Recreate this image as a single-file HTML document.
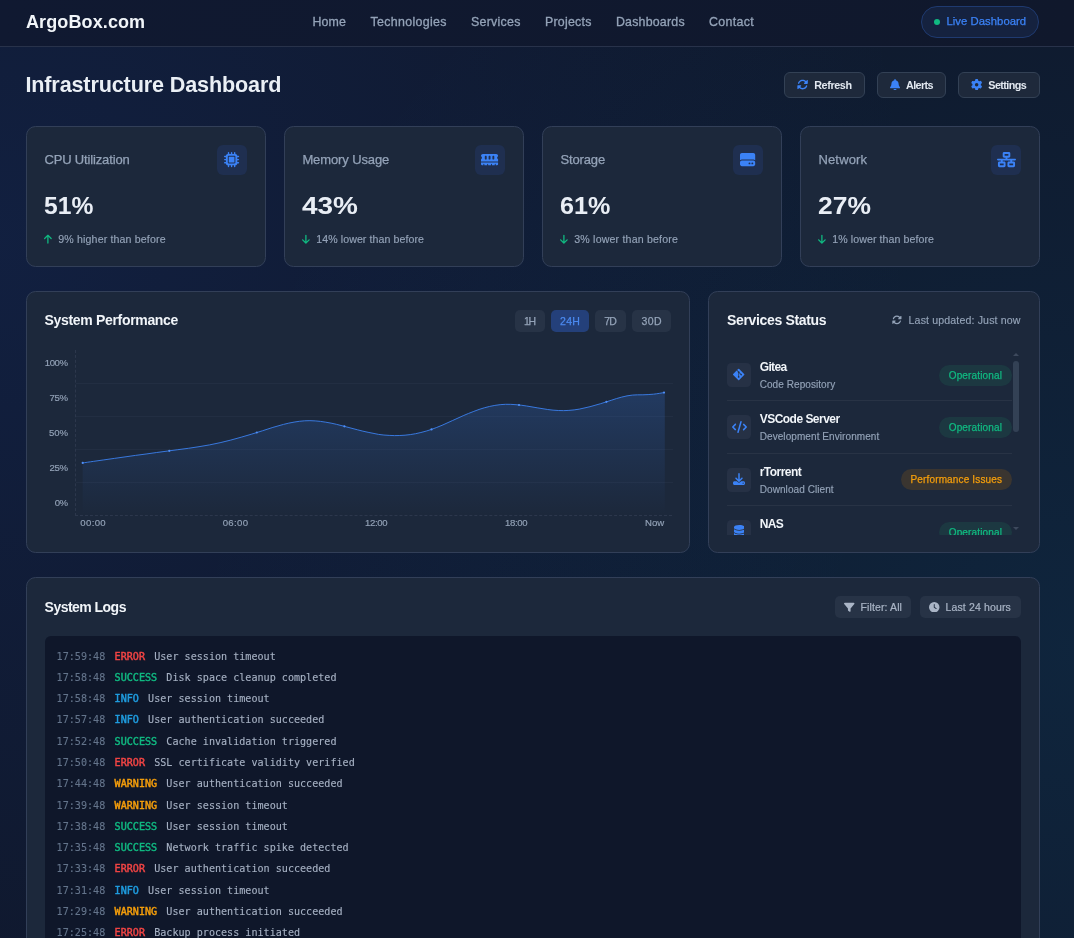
<!DOCTYPE html>
<html lang="en">
<head>
<meta charset="utf-8">
<title>ArgoBox.com - Infrastructure Dashboard</title>
<style>
*{box-sizing:border-box;margin:0;padding:0}
html,body{width:1074px;height:938px;overflow:hidden}
body{font-family:"Liberation Sans",sans-serif;color:#e2e8f0;background-color:#0f172a;
 background-image:radial-gradient(circle 920px at 0px 240px,rgba(37,99,235,.115),rgba(37,99,235,0)),radial-gradient(circle 880px at 1074px 650px,rgba(14,165,233,.097),rgba(14,165,233,0));
 position:relative}
svg.ic{display:block;flex:none}
span.t{display:inline-block;white-space:nowrap}
/* header */
.hdr{position:absolute;left:0;top:0;width:1074px;height:47px;background:linear-gradient(90deg,#101931,#10182c);border-bottom:1px solid #28324a;display:flex;align-items:center}
.logo{position:absolute;left:26px;top:10px;font-size:18px;font-weight:700;color:#f1f5f9;line-height:24px}
.nav{position:absolute;left:0;top:11.5px;font-size:12.4px;line-height:20px;color:#94a3b8;font-weight:400;list-style:none;-webkit-text-stroke:.3px #94a3b8}
.nav li{position:absolute;top:0}
.nav a{color:inherit;text-decoration:none}
.live{-webkit-text-stroke:.25px #3b82f6;line-height:30px;position:absolute;left:921px;top:6px;width:118px;height:32px;border-radius:16px;background:#15223f;border:1px solid #1f3a70;color:#3b82f6;font-size:11.3px;display:flex;align-items:center;padding-left:12px;text-decoration:none}
.live .dot{width:6px;height:6px;border-radius:50%;background:#10b981;margin-right:6.5px;flex:none}
/* title row */
.top{position:absolute;left:26px;top:72px;width:1014px;height:26px;display:flex;align-items:center;justify-content:space-between}
h1{font-size:21.6px;font-weight:700;color:#eaeff5;line-height:26px;position:relative;top:-0.5px}
.actions{display:flex;gap:12px}
.btn{height:26px;border:1px solid #334155;background:#1e293b;border-radius:6px;color:#e2e8f0;font-size:10.8px;font-weight:700;display:flex;align-items:center;padding:0 12px;font-family:inherit}
.btn svg{color:#3b82f6;margin-right:6px;position:relative;top:-.3px}
/* cards */
.card{position:absolute;background:#1c283b;border:1px solid #323f58;border-radius:9.5px}
.stat{top:126px;width:240px;height:141px}
.stat .lbl{-webkit-text-stroke:.25px #94a3b8;position:absolute;left:17.4px;top:23px;font-size:13px;line-height:20px;color:#94a3b8}
.stat .ibox{position:absolute;right:18px;top:18px;width:30px;height:30px;border-radius:6px;background:#1f2f50;color:#3b82f6;display:flex;align-items:center;justify-content:center}
.stat .val{position:absolute;left:17.4px;top:61px;font-size:24px;font-weight:700;line-height:36px;color:#e9eef5}
.stat .chg{-webkit-text-stroke:.15px #94a3b8;position:absolute;left:17px;top:104px;height:17px;font-size:10.6px;line-height:17px;color:#94a3b8;display:flex;align-items:center}
.stat .chg svg{color:#10b981;margin-right:6.5px}
.ctitle{font-size:14px;font-weight:700;color:#f1f5f9;line-height:20px}
/* chart */
.chart{left:26px;top:291px;width:664px;height:262px}
.chart .ctitle{position:absolute;left:17.5px;top:18px}
.ranges{position:absolute;right:18px;top:18px;display:flex;gap:6px}
.ranges button{-webkit-text-stroke:.25px;height:22px;border:0;border-radius:5px;background:#273346;color:#94a3b8;font-size:10.5px;font-family:inherit;line-height:22px;text-align:center}
.ranges button.on{background:#24407a;color:#4b8af0}
.ylab{-webkit-text-stroke:.15px;position:absolute;left:18px;top:65px;width:23px;height:152px;font-size:9.6px;color:#94a3b8;text-align:right}
.ylab > span{position:absolute;right:0;line-height:12px;white-space:nowrap}
.plot{position:absolute;left:48px;top:58px;width:597px;height:166px;border-left:1px dashed #2c374c;border-bottom:1px dashed #2c374c}
.plot svg{position:absolute;left:0;top:0}
.xlab{-webkit-text-stroke:.15px;position:absolute;left:53.3px;top:225px;width:584px;font-size:9.6px;color:#94a3b8;line-height:12px}
.xlab > span{position:absolute;top:0;white-space:nowrap}
/* services */
.services{left:708px;top:291px;width:332px;height:262px}
.services .ctitle{position:absolute;left:18px;top:18px}
.upd{-webkit-text-stroke:.15px;position:absolute;right:18.5px;top:20px;height:16px;display:flex;align-items:center;font-size:10.6px;color:#94a3b8}
.upd svg{margin-right:6.5px}
.slist{position:absolute;left:18px;top:57px;width:292px;height:185.5px;overflow:hidden;list-style:none}
.slist li{height:52.33px;width:285px;border-bottom:1px solid #283345;position:relative}
.sib{position:absolute;left:0;top:14px;width:24px;height:24px;border-radius:4.5px;background:#263145;color:#3b82f6;display:flex;align-items:center;justify-content:center}
.sib svg{position:relative;top:-.5px}
.sname{position:absolute;left:32.7px;top:9px;font-size:12px;font-weight:700;color:#f1f5f9;line-height:18px}
.ssub{-webkit-text-stroke:.15px;position:absolute;left:32.7px;top:29px;font-size:10px;color:#94a3b8;line-height:14px}
.badge{-webkit-text-stroke:.25px;position:absolute;right:0.5px;top:15.6px;height:21px;border-radius:10.5px;font-size:10px;line-height:21px;padding:0 9.5px}
.badge.ok{background:#1c3841;color:#10b981}
.badge.warn{background:#3a3530;color:#f59e0b}
.sbar{position:absolute;left:304px;top:57px;width:6px;height:185.5px}
.sbar i{position:absolute;left:0;top:12px;width:6px;height:71px;border-radius:3px;background:#334155}
.sbar b{position:absolute;left:0;width:0;height:0;border-left:3px solid transparent;border-right:3px solid transparent}
.sbar b.u{top:4px;border-bottom:3px solid #3d495d}
.sbar b.d{bottom:5px;border-top:3px solid #3d495d}
/* logs */
.logs{left:26px;top:577px;width:1014px;height:420px}
.logs .ctitle{position:absolute;left:17.6px;top:18.7px}
.lbtns{position:absolute;right:18px;top:18px;display:flex;gap:9px}
.lbtns button{-webkit-text-stroke:.2px;height:22px;border:0;border-radius:5px;background:#273346;color:#aab5c6;font-size:10.5px;font-family:inherit;display:flex;align-items:center;padding:0 9px}
.lbtns svg{margin-right:6px}
.logbox{position:absolute;left:18px;top:58px;width:976px;height:380px;background:#0f172a;border-radius:6px;padding:9.5px 12px 9px 11.6px;font-family:"DejaVu Sans Mono","Liberation Mono",monospace;font-size:10.1px;list-style:none;overflow:hidden}
.logbox li{height:21.3px;line-height:21.3px;white-space:nowrap;color:#a7b2c4;-webkit-text-stroke:.12px}
.logbox .tm{color:#64748b;margin-right:9.4px}
.logbox .lv{font-weight:400;-webkit-text-stroke:.45px;margin-right:9.2px}
.lv.e{color:#ef4444}.lv.s{color:#10b981}.lv.i{color:#1f9de0}.lv.w{color:#f59e0b}
</style>
</head>
<body style="will-change:transform">
<header class="hdr">
  <div class="logo"><span class="t" style="letter-spacing:0.11px;margin-right:-0.11px">ArgoBox.com</span></div>
  <ul class="nav">
    <li style="left:312.6px"><a><span class="t" style="letter-spacing:0.08px;margin-right:-0.08px">Home</span></a></li>
    <li style="left:370.4px"><a><span class="t" style="letter-spacing:0.34px;margin-right:-0.34px">Technologies</span></a></li>
    <li style="left:470.9px"><a><span class="t" style="letter-spacing:0.30px;margin-right:-0.30px">Services</span></a></li>
    <li style="left:544.9px"><a><span class="t" style="letter-spacing:0.25px;margin-right:-0.25px">Projects</span></a></li>
    <li style="left:615.9px"><a><span class="t" style="letter-spacing:0.21px;margin-right:-0.21px">Dashboards</span></a></li>
    <li style="left:709.1px"><a><span class="t" style="letter-spacing:0.32px;margin-right:-0.32px">Contact</span></a></li>
  </ul>
  <a class="live"><span class="dot"></span><span class="t" style="letter-spacing:0.04px;margin-right:-0.04px;position:relative;top:-1px">Live Dashboard</span></a>
</header>

<div class="top">
  <h1 style="margin-left:-.6px"><span class="t" style="letter-spacing:-0.14px;margin-right:0.14px">Infrastructure Dashboard</span></h1>
  <div class="actions">
    <button class="btn" style="width:81px"><svg class="ic" width="11.2" height="11.2" viewBox="0 0 512 512" fill="currentColor"><path d="M142.900 142.900c62.200-62.200 162.700-62.500 225.300-1L327 183c-6.900 6.900-8.900 17.200-5.200 26.200s12.500 14.800 22.200 14.800H463.500c0 0 0 0 0 0H472c13.300 0 24-10.700 24-24V72c0-9.700-5.800-18.500-14.800-22.200s-19.300-1.700-26.200 5.200L413.400 96.600c-87.600-86.500-228.700-86.200-315.800 1C73.200 122 55.600 150.700 44.800 181.400c-5.900 16.700 2.900 34.900 19.500 40.800s34.900-2.900 40.800-19.500c7.700-21.800 20.200-42.300 37.800-59.800zM16 312v7.600 .7V440c0 9.700 5.800 18.500 14.800 22.200s19.300 1.700 26.200-5.200l41.600-41.600c87.600 86.500 228.700 86.200 315.800-1c24.400-24.400 42.100-53.100 52.900-83.700c5.900-16.700-2.900-34.900-19.500-40.800s-34.900 2.900-40.800 19.500c-7.700 21.800-20.200 42.300-37.800 59.800c-62.200 62.200-162.700 62.500-225.300 1L185 329c6.900-6.900 8.900-17.200 5.200-26.200s-12.500-14.800-22.200-14.800H48.400h-.7H40c-13.300 0-24 10.700-24 24z"/></svg><span class="t" style="letter-spacing:-0.40px;margin-right:0.40px">Refresh</span></button>
    <button class="btn" style="width:69px"><svg class="ic" width="10.06" height="11.5" viewBox="0 0 448 512" fill="currentColor"><path d="M224 0c-17.700 0-32 14.300-32 32V51.200C119 66 64 130.600 64 208v18.800c0 47-17.300 92.400-48.500 127.600l-7.400 8.300c-8.400 9.400-10.400 22.900-5.300 34.400S19.400 416 32 416H416c12.600 0 24-7.400 29.200-18.900s3.100-25-5.300-34.400l-7.400-8.300C401.300 319.200 384 273.900 384 226.800V208c0-77.400-55-142-128-156.800V32c0-17.700-14.300-32-32-32zm45.300 493.300c12-12 18.700-28.300 18.700-45.300H224 160c0 17 6.700 33.300 18.700 45.300s28.300 18.700 45.300 18.700s33.300-6.700 45.300-18.700z"/></svg><span class="t" style="letter-spacing:-0.64px;margin-right:0.64px">Alerts</span></button>
    <button class="btn" style="width:82px"><svg class="ic" width="11.3" height="11.3" viewBox="0 0 512 512" fill="currentColor"><path d="M495.900 166.600c3.200 8.700 .5 18.400-6.400 24.600l-43.300 39.400c1.100 8.300 1.700 16.800 1.700 25.400s-.6 17.100-1.700 25.400l43.300 39.400c6.900 6.200 9.600 15.900 6.400 24.600c-4.400 11.900-9.700 23.300-15.800 34.300l-4.700 8.100c-6.600 11-14 21.400-22.100 31.200c-5.900 7.200-15.700 9.600-24.500 6.800l-55.700-17.700c-13.400 10.300-28.200 18.900-44 25.400l-12.500 57.100c-2 9.100-9 16.300-18.200 17.800c-13.800 2.300-28 3.500-42.500 3.500s-28.700-1.200-42.500-3.500c-9.200-1.500-16.200-8.700-18.200-17.800l-12.500-57.100c-15.800-6.500-30.600-15.100-44-25.400L83.100 425.900c-8.800 2.800-18.600 .3-24.500-6.800c-8.100-9.800-15.500-20.200-22.100-31.200l-4.700-8.100c-6.100-11-11.400-22.400-15.800-34.300c-3.200-8.700-.5-18.400 6.400-24.600l43.300-39.400C64.600 273.100 64 264.600 64 256s.6-17.100 1.700-25.400L22.400 191.200c-6.900-6.200-9.600-15.900-6.400-24.600c4.400-11.900 9.700-23.300 15.800-34.300l4.700-8.100c6.600-11 14-21.400 22.100-31.200c5.900-7.200 15.700-9.600 24.500-6.800l55.700 17.700c13.400-10.300 28.200-18.900 44-25.400l12.500-57.100c2-9.100 9-16.300 18.200-17.800C227.300 1.200 241.500 0 256 0s28.700 1.200 42.500 3.500c9.200 1.500 16.200 8.700 18.200 17.800l12.500 57.100c15.800 6.500 30.600 15.100 44 25.400l55.700-17.700c8.800-2.800 18.600-.3 24.500 6.800c8.100 9.800 15.500 20.200 22.100 31.200l4.700 8.100c6.100 11 11.400 22.400 15.800 34.300zM256 336a80 80 0 1 0 0-160 80 80 0 1 0 0 160z"/></svg><span class="t" style="letter-spacing:-0.58px;margin-right:0.58px">Settings</span></button>
  </div>
</div>

<section class="card stat" style="left:26px">
  <div class="lbl"><span class="t" style="letter-spacing:-0.15px;margin-right:0.15px">CPU Utilization</span></div>
  <div class="ibox"><svg class="ic" width="15.2" height="15.2" viewBox="0 0 512 512" fill="currentColor"><path d="M176 24c0-13.300-10.700-24-24-24s-24 10.700-24 24V64c-35.300 0-64 28.700-64 64H24c-13.300 0-24 10.700-24 24s10.700 24 24 24H64v56H24c-13.300 0-24 10.700-24 24s10.700 24 24 24H64v56H24c-13.300 0-24 10.700-24 24s10.700 24 24 24H64c0 35.300 28.700 64 64 64v40c0 13.300 10.700 24 24 24s24-10.700 24-24V448h56v40c0 13.300 10.700 24 24 24s24-10.700 24-24V448h56v40c0 13.300 10.700 24 24 24s24-10.700 24-24V448c35.300 0 64-28.700 64-64h40c13.300 0 24-10.700 24-24s-10.700-24-24-24H448V280h40c13.300 0 24-10.700 24-24s-10.700-24-24-24H448V176h40c13.300 0 24-10.700 24-24s-10.700-24-24-24H448c0-35.300-28.700-64-64-64V24c0-13.300-10.700-24-24-24s-24 10.700-24 24V64H280V24c0-13.300-10.700-24-24-24s-24 10.700-24 24V64H176V24zM160 128H352c17.700 0 32 14.300 32 32V352c0 17.700-14.300 32-32 32H160c-17.700 0-32-14.300-32-32V160c0-17.700 14.300-32 32-32zm192 32H160V352H352V160z"/></svg></div>
  <div class="val"><span class="t" style="transform:scaleX(1.027);transform-origin:0 50%">51%</span></div>
  <div class="chg"><svg class="ic" width="7.8" height="10.4" viewBox="0 0 384 512" fill="currentColor"><path d="M214.600 41.400c-12.500-12.500-32.800-12.500-45.300 0l-160 160c-12.500 12.500-12.500 32.800 0 45.300s32.800 12.500 45.300 0L160 141.200V448c0 17.700 14.300 32 32 32s32-14.300 32-32V141.200L329.400 246.600c12.500 12.500 32.800 12.500 45.300 0s12.500-32.800 0-45.300l-160-160z"/></svg><span class="t" style="letter-spacing:0.15px;margin-right:-0.15px">9% higher than before</span></div>
</section>
<section class="card stat" style="left:284px">
  <div class="lbl"><span class="t" style="letter-spacing:-0.11px;margin-right:0.11px">Memory Usage</span></div>
  <div class="ibox"><svg class="ic" width="17.1" height="15.2" viewBox="0 0 576 512" fill="currentColor"><path d="M64 64C28.700 64 0 92.700 0 128v7.400c0 6.800 4.400 12.600 10.100 16.300C23.300 160.300 32 175.100 32 192s-8.700 31.700-21.900 40.300C4.400 236 0 241.800 0 248.600V320H576V248.600c0-6.800-4.400-12.600-10.100-16.300C552.700 223.700 544 208.900 544 192s8.700-31.700 21.900-40.300c5.700-3.700 10.100-9.500 10.100-16.300V128c0-35.300-28.700-64-64-64H64zM576 352H0v64c0 17.700 14.300 32 32 32H80V416c0-8.800 7.200-16 16-16s16 7.200 16 16v32h96V416c0-8.800 7.200-16 16-16s16 7.200 16 16v32h96V416c0-8.800 7.200-16 16-16s16 7.200 16 16v32h96V416c0-8.800 7.200-16 16-16s16 7.200 16 16v32h48c17.700 0 32-14.300 32-32V352zM192 160v64c0 17.700-14.300 32-32 32s-32-14.300-32-32V160c0-17.700 14.300-32 32-32s32 14.300 32 32zm128 0v64c0 17.700-14.300 32-32 32s-32-14.300-32-32V160c0-17.700 14.300-32 32-32s32 14.300 32 32zm128 0v64c0 17.700-14.300 32-32 32s-32-14.300-32-32V160c0-17.700 14.300-32 32-32s32 14.300 32 32z"/></svg></div>
  <div class="val"><span class="t" style="transform:scaleX(1.165);transform-origin:0 50%">43%</span></div>
  <div class="chg"><svg class="ic" width="7.8" height="10.4" viewBox="0 0 384 512" fill="currentColor"><path d="M169.400 470.600c12.500 12.500 32.800 12.500 45.300 0l160-160c12.500-12.500 12.500-32.800 0-45.300s-32.800-12.500-45.300 0L224 370.800V64c0-17.700-14.300-32-32-32s-32 14.300-32 32V370.800L54.600 265.400c-12.500-12.500-32.800-12.500-45.300 0s-12.500 32.800 0 45.300l160 160z"/></svg><span class="t" style="letter-spacing:0.08px;margin-right:-0.08px">14% lower than before</span></div>
</section>
<section class="card stat" style="left:542px">
  <div class="lbl"><span class="t" style="letter-spacing:-0.12px;margin-right:0.12px">Storage</span></div>
  <div class="ibox"><svg class="ic" width="15.2" height="15.2" viewBox="0 0 512 512" fill="currentColor"><path d="M0 96C0 60.700 28.700 32 64 32H448c35.300 0 64 28.700 64 64V280.400c-17-15.200-39.400-24.400-64-24.400H64c-24.600 0-47 9.200-64 24.400V96zM64 288H448c35.300 0 64 28.700 64 64v64c0 35.300-28.700 64-64 64H64c-35.300 0-64-28.700-64-64V352c0-35.300 28.700-64 64-64zM320 416a32 32 0 1 0 0-64 32 32 0 1 0 0 64zm128-32a32 32 0 1 0 -64 0 32 32 0 1 0 64 0z"/></svg></div>
  <div class="val"><span class="t" style="transform:scaleX(1.048);transform-origin:0 50%">61%</span></div>
  <div class="chg"><svg class="ic" width="7.8" height="10.4" viewBox="0 0 384 512" fill="currentColor"><path d="M169.400 470.600c12.500 12.500 32.800 12.500 45.300 0l160-160c12.500-12.500 12.500-32.800 0-45.300s-32.800-12.500-45.300 0L224 370.800V64c0-17.700-14.300-32-32-32s-32 14.300-32 32V370.800L54.600 265.400c-12.500-12.500-32.800-12.500-45.300 0s-12.500 32.800 0 45.300l160 160z"/></svg><span class="t" style="letter-spacing:0.18px;margin-right:-0.18px">3% lower than before</span></div>
</section>
<section class="card stat" style="left:800px">
  <div class="lbl"><span class="t" style="letter-spacing:0.17px;margin-right:-0.17px">Network</span></div>
  <div class="ibox"><svg class="ic" width="19.0" height="15.2" viewBox="0 0 640 512" fill="currentColor"><path d="M256 64H384v64H256V64zM240 0c-26.500 0-48 21.500-48 48v96c0 26.500 21.500 48 48 48h48v32H32c-17.700 0-32 14.300-32 32s14.300 32 32 32h96v32H80c-26.500 0-48 21.500-48 48v96c0 26.500 21.500 48 48 48H240c26.500 0 48-21.500 48-48V368c0-26.500-21.500-48-48-48H192V288H448v32H400c-26.500 0-48 21.500-48 48v96c0 26.500 21.500 48 48 48H560c26.500 0 48-21.500 48-48V368c0-26.500-21.500-48-48-48H512V288h96c17.700 0 32-14.300 32-32s-14.300-32-32-32H352V192h48c26.500 0 48-21.500 48-48V48c0-26.500-21.500-48-48-48H240zM96 448V384H224v64H96zm320-64H544v64H416V384z"/></svg></div>
  <div class="val"><span class="t" style="transform:scaleX(1.101);transform-origin:0 50%">27%</span></div>
  <div class="chg"><svg class="ic" width="7.8" height="10.4" viewBox="0 0 384 512" fill="currentColor"><path d="M169.400 470.600c12.500 12.500 32.800 12.500 45.300 0l160-160c12.500-12.500 12.500-32.800 0-45.300s-32.800-12.500-45.300 0L224 370.800V64c0-17.700-14.300-32-32-32s-32 14.300-32 32V370.800L54.600 265.400c-12.500-12.500-32.800-12.500-45.300 0s-12.500 32.800 0 45.300l160 160z"/></svg><span class="t" style="letter-spacing:0.08px;margin-right:-0.08px">1% lower than before</span></div>
</section>

<section class="card chart">
  <h2 class="ctitle"><span class="t" style="letter-spacing:-0.32px;margin-right:0.32px">System Performance</span></h2>
  <div class="ranges">
    <button style="width:30px"><span class="t" style="letter-spacing:-1.24px;margin-right:1.24px">1H</span></button>
    <button class="on" style="width:38px"><span class="t" style="letter-spacing:0.32px;margin-right:-0.32px">24H</span></button>
    <button style="width:31px"><span class="t" style="letter-spacing:-0.84px;margin-right:0.84px">7D</span></button>
    <button style="width:39px"><span class="t" style="letter-spacing:0.47px;margin-right:-0.47px">30D</span></button>
  </div>
  <div class="ylab">
    <span style="top:0"><span class="t" style="letter-spacing:-0.45px;margin-right:0.45px">100%</span></span>
    <span style="top:35px"><span class="t" style="letter-spacing:-0.30px;margin-right:0.30px">75%</span></span>
    <span style="top:70px"><span class="t" style="letter-spacing:-0.15px;margin-right:0.15px">50%</span></span>
    <span style="top:105px"><span class="t" style="letter-spacing:-0.30px;margin-right:0.30px">25%</span></span>
    <span style="top:140px"><span class="t" style="letter-spacing:-0.57px;margin-right:0.57px">0%</span></span>
  </div>
  <div class="plot">
    <svg width="597" height="167" viewBox="0 0 597 167">
      <defs><linearGradient id="ag" x1="0" y1="0" x2="0" y2="1"><stop offset="0" stop-color="#3b82f6" stop-opacity=".2"/><stop offset="1" stop-color="#3b82f6" stop-opacity="0"/></linearGradient></defs>
      <g stroke="#222e42" stroke-width="1"><line x1="0" y1="33.5" x2="597" y2="33.5"/><line x1="0" y1="66.5" x2="597" y2="66.5"/><line x1="0" y1="99.5" x2="597" y2="99.5"/><line x1="0" y1="132.5" x2="597" y2="132.5"/></g>
      <path d="M6.7,112.9 C8.5,112.7 13.7,111.9 17.3,111.4 C20.8,110.9 24.3,110.4 27.8,109.9 C31.4,109.5 34.9,108.9 38.4,108.4 C41.9,107.9 45.5,107.4 49.0,106.9 C52.5,106.4 56.0,105.9 59.5,105.4 C63.1,104.9 66.6,104.4 70.1,104.0 C73.6,103.5 77.2,103.0 80.7,102.5 C84.2,102.0 87.7,101.5 91.3,101.1 C94.8,100.6 98.3,100.2 101.8,99.7 C105.3,99.2 108.9,98.8 112.4,98.3 C115.9,97.8 119.4,97.3 123.0,96.7 C126.5,96.1 130.0,95.5 133.5,94.9 C137.1,94.2 140.6,93.5 144.1,92.7 C147.6,91.9 151.1,91.0 154.7,90.1 C158.2,89.2 161.7,88.2 165.2,87.2 C168.8,86.2 172.3,85.2 175.8,84.1 C179.3,83.0 182.9,81.9 186.4,80.8 C189.9,79.6 193.4,78.5 196.9,77.4 C200.5,76.4 204.0,75.3 207.5,74.4 C211.0,73.5 214.6,72.7 218.1,72.1 C221.6,71.5 225.1,71.0 228.7,70.8 C232.2,70.6 235.7,70.6 239.2,70.9 C242.7,71.1 246.3,71.6 249.8,72.2 C253.3,72.7 256.8,73.5 260.4,74.3 C263.9,75.1 267.4,76.1 270.9,77.0 C274.5,77.9 278.0,78.9 281.5,79.8 C285.0,80.7 288.5,81.6 292.1,82.3 C295.6,83.1 299.1,83.8 302.6,84.4 C306.2,84.9 309.7,85.3 313.2,85.4 C316.7,85.6 320.2,85.7 323.8,85.5 C327.3,85.4 330.8,85.1 334.3,84.6 C337.9,84.1 341.4,83.4 344.9,82.5 C348.4,81.7 352.0,80.6 355.5,79.4 C359.0,78.2 362.5,76.7 366.0,75.3 C369.6,73.8 373.1,72.1 376.6,70.5 C380.1,68.9 383.7,67.2 387.2,65.7 C390.7,64.2 394.2,62.7 397.8,61.4 C401.3,60.0 404.8,58.8 408.3,57.8 C411.8,56.8 415.4,56.0 418.9,55.4 C422.4,54.8 425.9,54.4 429.5,54.3 C433.0,54.2 436.5,54.4 440.0,54.7 C443.6,54.9 447.1,55.5 450.6,56.0 C454.1,56.5 457.6,57.2 461.2,57.8 C464.7,58.4 468.2,59.0 471.7,59.5 C475.3,60.0 478.8,60.4 482.3,60.5 C485.8,60.7 489.4,60.7 492.9,60.4 C496.4,60.2 499.9,59.7 503.4,59.1 C507.0,58.4 510.5,57.6 514.0,56.7 C517.5,55.8 521.1,54.7 524.6,53.7 C528.1,52.6 531.6,51.4 535.2,50.3 C538.7,49.2 542.2,47.9 545.7,47.1 C549.2,46.2 552.8,45.4 556.3,45.1 C559.8,44.7 563.3,44.9 566.9,44.8 C570.4,44.6 573.9,44.6 577.4,44.2 C581.0,43.8 586.2,42.9 588.0,42.6 L588.8,42.6 L588.8,165 L6.7,165 Z" fill="url(#ag)"/>
      <path d="M6.7,112.9 C8.5,112.7 13.7,111.9 17.3,111.4 C20.8,110.9 24.3,110.4 27.8,109.9 C31.4,109.5 34.9,108.9 38.4,108.4 C41.9,107.9 45.5,107.4 49.0,106.9 C52.5,106.4 56.0,105.9 59.5,105.4 C63.1,104.9 66.6,104.4 70.1,104.0 C73.6,103.5 77.2,103.0 80.7,102.5 C84.2,102.0 87.7,101.5 91.3,101.1 C94.8,100.6 98.3,100.2 101.8,99.7 C105.3,99.2 108.9,98.8 112.4,98.3 C115.9,97.8 119.4,97.3 123.0,96.7 C126.5,96.1 130.0,95.5 133.5,94.9 C137.1,94.2 140.6,93.5 144.1,92.7 C147.6,91.9 151.1,91.0 154.7,90.1 C158.2,89.2 161.7,88.2 165.2,87.2 C168.8,86.2 172.3,85.2 175.8,84.1 C179.3,83.0 182.9,81.9 186.4,80.8 C189.9,79.6 193.4,78.5 196.9,77.4 C200.5,76.4 204.0,75.3 207.5,74.4 C211.0,73.5 214.6,72.7 218.1,72.1 C221.6,71.5 225.1,71.0 228.7,70.8 C232.2,70.6 235.7,70.6 239.2,70.9 C242.7,71.1 246.3,71.6 249.8,72.2 C253.3,72.7 256.8,73.5 260.4,74.3 C263.9,75.1 267.4,76.1 270.9,77.0 C274.5,77.9 278.0,78.9 281.5,79.8 C285.0,80.7 288.5,81.6 292.1,82.3 C295.6,83.1 299.1,83.8 302.6,84.4 C306.2,84.9 309.7,85.3 313.2,85.4 C316.7,85.6 320.2,85.7 323.8,85.5 C327.3,85.4 330.8,85.1 334.3,84.6 C337.9,84.1 341.4,83.4 344.9,82.5 C348.4,81.7 352.0,80.6 355.5,79.4 C359.0,78.2 362.5,76.7 366.0,75.3 C369.6,73.8 373.1,72.1 376.6,70.5 C380.1,68.9 383.7,67.2 387.2,65.7 C390.7,64.2 394.2,62.7 397.8,61.4 C401.3,60.0 404.8,58.8 408.3,57.8 C411.8,56.8 415.4,56.0 418.9,55.4 C422.4,54.8 425.9,54.4 429.5,54.3 C433.0,54.2 436.5,54.4 440.0,54.7 C443.6,54.9 447.1,55.5 450.6,56.0 C454.1,56.5 457.6,57.2 461.2,57.8 C464.7,58.4 468.2,59.0 471.7,59.5 C475.3,60.0 478.8,60.4 482.3,60.5 C485.8,60.7 489.4,60.7 492.9,60.4 C496.4,60.2 499.9,59.7 503.4,59.1 C507.0,58.4 510.5,57.6 514.0,56.7 C517.5,55.8 521.1,54.7 524.6,53.7 C528.1,52.6 531.6,51.4 535.2,50.3 C538.7,49.2 542.2,47.9 545.7,47.1 C549.2,46.2 552.8,45.4 556.3,45.1 C559.8,44.7 563.3,44.9 566.9,44.8 C570.4,44.6 573.9,44.6 577.4,44.2 C581.0,43.8 586.2,42.9 588.0,42.6" fill="none" stroke="#3b80ee" stroke-width="0.9"/>
      <g fill="#4f8ff7"><circle cx="6.7" cy="112.9" r="1.1"/><circle cx="93.3" cy="100.8" r="1.1"/><circle cx="180.8" cy="82.5" r="1.1"/><circle cx="268.4" cy="76.3" r="1.1"/><circle cx="355.5" cy="79.4" r="1.1"/><circle cx="443.0" cy="55.0" r="1.1"/><circle cx="530.4" cy="51.8" r="1.1"/><circle cx="588.0" cy="42.6" r="1.1"/></g>
    </svg>
  </div>
  <div class="xlab">
    <span style="left:0"><span class="t" style="letter-spacing:0.35px;margin-right:-0.35px">00:00</span></span>
    <span style="left:142.4px"><span class="t" style="letter-spacing:0.35px;margin-right:-0.35px">06:00</span></span>
    <span style="left:284.8px"><span class="t" style="letter-spacing:-0.38px;margin-right:0.38px">12:00</span></span>
    <span style="left:424.6px"><span class="t" style="letter-spacing:-0.30px;margin-right:0.30px">18:00</span></span>
    <span style="right:0"><span class="t" style="letter-spacing:-0.00px;margin-right:0.00px">Now</span></span>
  </div>
</section>

<section class="card services">
  <h2 class="ctitle"><span class="t" style="letter-spacing:-0.34px;margin-right:0.34px">Services Status</span></h2>
  <div class="upd"><svg class="ic" width="9.8" height="9.8" viewBox="0 0 512 512" fill="currentColor"><path d="M142.900 142.900c62.200-62.200 162.700-62.500 225.300-1L327 183c-6.900 6.900-8.900 17.200-5.200 26.200s12.500 14.800 22.200 14.800H463.500c0 0 0 0 0 0H472c13.300 0 24-10.700 24-24V72c0-9.700-5.800-18.500-14.800-22.200s-19.300-1.700-26.200 5.200L413.400 96.600c-87.600-86.500-228.700-86.200-315.800 1C73.200 122 55.600 150.700 44.800 181.400c-5.900 16.700 2.900 34.900 19.500 40.800s34.900-2.900 40.800-19.500c7.700-21.800 20.200-42.300 37.800-59.800zM16 312v7.600 .7V440c0 9.700 5.800 18.500 14.800 22.200s19.300 1.700 26.200-5.200l41.600-41.600c87.600 86.500 228.700 86.200 315.800-1c24.400-24.400 42.100-53.100 52.900-83.700c5.900-16.700-2.900-34.900-19.500-40.800s-34.900 2.900-40.800 19.500c-7.700 21.800-20.200 42.300-37.800 59.800c-62.200 62.200-162.700 62.500-225.300 1L185 329c6.900-6.900 8.900-17.200 5.200-26.200s-12.500-14.800-22.200-14.800H48.400h-.7H40c-13.300 0-24 10.700-24 24z"/></svg><span class="t" style="letter-spacing:0.14px;margin-right:-0.14px">Last updated: Just now</span></div>
  <ul class="slist">
    <li><div class="sib"><svg class="ic" width="11.38" height="13.0" viewBox="0 0 448 512" fill="currentColor"><path d="M439.550 236.050L244 40.450a28.870 28.870 0 0 0-40.810 0l-40.660 40.630 51.520 51.520c27.060-9.140 52.680 16.770 43.390 43.680l49.660 49.660c34.230-11.800 61.180 31 35.470 56.690-26.490 26.490-70.210-2.870-56-37.340L240.220 199v121.850c25.300 12.540 22.260 41.850 9.080 55a34.340 34.340 0 0 1-48.550 0c-17.570-17.600-11.070-46.910 11.250-56v-123c-20.800-8.510-24.600-30.740-18.640-45L142.570 101 8.450 235.140a28.860 28.860 0 0 0 0 40.810l195.610 195.600a28.860 28.860 0 0 0 40.800 0l194.690-194.690a28.860 28.860 0 0 0 0-40.810z"/></svg></div><div class="sname"><span class="t" style="letter-spacing:-0.63px;margin-right:0.63px">Gitea</span></div><div class="ssub"><span class="t" style="letter-spacing:0.07px;margin-right:-0.07px">Code Repository</span></div><span class="badge ok"><span class="t" style="letter-spacing:0.16px;margin-right:-0.16px">Operational</span></span></li>
    <li><div class="sib"><svg class="ic" width="15.0" height="12.0" viewBox="0 0 640 512" fill="currentColor"><path d="M392.800 1.200c-17-4.900-34.700 5-39.600 22l-128 448c-4.900 17 5 34.700 22 39.600s34.700-5 39.600-22l128-448c4.900-17-5-34.700-22-39.600zm80.600 120.100c-12.500 12.500-12.500 32.800 0 45.300L562.700 256l-89.400 89.400c-12.500 12.500-12.500 32.800 0 45.300s32.800 12.500 45.300 0l112-112c12.500-12.500 12.500-32.800 0-45.300l-112-112c-12.500-12.500-32.800-12.500-45.300 0zm-306.700 0c-12.500-12.500-32.800-12.500-45.300 0l-112 112c-12.500 12.500-12.500 32.800 0 45.300l112 112c12.500 12.500 32.800 12.500 45.300 0s12.500-32.800 0-45.300L77.300 256l89.400-89.400c12.500-12.500 12.500-32.800 0-45.300z"/></svg></div><div class="sname"><span class="t" style="letter-spacing:-0.52px;margin-right:0.52px">VSCode Server</span></div><div class="ssub"><span class="t" style="letter-spacing:0.08px;margin-right:-0.08px">Development Environment</span></div><span class="badge ok"><span class="t" style="letter-spacing:0.16px;margin-right:-0.16px">Operational</span></span></li>
    <li><div class="sib"><svg class="ic" width="12.0" height="12.0" viewBox="0 0 512 512" fill="currentColor"><path d="M288 32c0-17.700-14.300-32-32-32s-32 14.300-32 32V274.700l-73.400-73.400c-12.500-12.500-32.800-12.500-45.300 0s-12.500 32.800 0 45.300l128 128c12.500 12.500 32.800 12.500 45.300 0l128-128c12.500-12.500 12.500-32.800 0-45.300s-32.800-12.500-45.300 0L288 274.700V32zM64 352c-35.300 0-64 28.700-64 64v32c0 35.300 28.700 64 64 64H448c35.300 0 64-28.700 64-64V416c0-35.300-28.700-64-64-64H346.500l-45.300 45.300c-25 25-65.500 25-90.500 0L165.500 352H64zm368 56a24 24 0 1 1 0 48 24 24 0 1 1 0-48z"/></svg></div><div class="sname"><span class="t" style="letter-spacing:-0.54px;margin-right:0.54px">rTorrent</span></div><div class="ssub"><span class="t" style="letter-spacing:0.08px;margin-right:-0.08px">Download Client</span></div><span class="badge warn"><span class="t" style="letter-spacing:0.15px;margin-right:-0.15px">Performance Issues</span></span></li>
    <li><div class="sib"><svg class="ic" width="10.5" height="12.0" viewBox="0 0 448 512" fill="currentColor"><path d="M448 80v48c0 44.200-100.300 80-224 80S0 172.200 0 128V80C0 35.800 100.300 0 224 0S448 35.800 448 80zM393.200 214.700c20.800-7.400 39.900-16.900 54.800-28.600V288c0 44.200-100.300 80-224 80S0 332.200 0 288V186.100c14.900 11.800 34 21.200 54.800 28.600C99.700 230.700 159.500 240 224 240s124.300-9.300 169.200-25.300zM0 346.100c14.900 11.800 34 21.200 54.800 28.600C99.700 390.700 159.500 400 224 400s124.300-9.300 169.200-25.300c20.800-7.400 39.900-16.900 54.800-28.600V432c0 44.200-100.300 80-224 80S0 476.200 0 432V346.100z"/></svg></div><div class="sname"><span class="t" style="letter-spacing:-0.67px;margin-right:0.67px">NAS</span></div><div class="ssub"><span class="t" style="letter-spacing:-0.32px;margin-right:0.32px">Network Storage</span></div><span class="badge ok"><span class="t" style="letter-spacing:0.16px;margin-right:-0.16px">Operational</span></span></li>
  </ul>
  <div class="sbar"><b class="u"></b><i></i><b class="d"></b></div>
</section>

<section class="card logs">
  <h2 class="ctitle"><span class="t" style="letter-spacing:-0.53px;margin-right:0.53px">System Logs</span></h2>
  <div class="lbtns">
    <button style="width:76px"><svg class="ic" width="10.5" height="10.5" viewBox="0 0 512 512" fill="currentColor"><path d="M3.900 54.900C10.500 40.900 24.500 32 40 32H472c15.500 0 29.500 8.900 36.100 22.900s4.600 30.500-5.200 42.500L320 320.900V448c0 12.100-6.800 23.200-17.700 28.600s-23.800 4.300-33.500-3l-64-48c-8.100-6-12.800-15.500-12.800-25.600V320.900L9 97.300C-.7 85.400-2.800 68.800 3.900 54.900z"/></svg><span class="t" style="letter-spacing:0.12px;margin-right:-0.12px">Filter: All</span></button>
    <button style="width:101px"><svg class="ic" width="10.5" height="10.5" viewBox="0 0 512 512" fill="currentColor"><path d="M256 0a256 256 0 1 1 0 512A256 256 0 1 1 256 0zM232 120V256c0 8 4 15.500 10.700 20l96 64c11 7.400 25.900 4.400 33.300-6.700s4.400-25.900-6.700-33.300L280 243.200V120c0-13.300-10.700-24-24-24s-24 10.700-24 24z"/></svg><span class="t" style="letter-spacing:0.14px;margin-right:-0.14px">Last 24 hours</span></button>
  </div>
  <ul class="logbox">
    <li><span class="tm">17:59:48</span><span class="lv e">ERROR</span>User session timeout</li>
    <li><span class="tm">17:58:48</span><span class="lv s">SUCCESS</span>Disk space cleanup completed</li>
    <li><span class="tm">17:58:48</span><span class="lv i">INFO</span>User session timeout</li>
    <li><span class="tm">17:57:48</span><span class="lv i">INFO</span>User authentication succeeded</li>
    <li><span class="tm">17:52:48</span><span class="lv s">SUCCESS</span>Cache invalidation triggered</li>
    <li><span class="tm">17:50:48</span><span class="lv e">ERROR</span>SSL certificate validity verified</li>
    <li><span class="tm">17:44:48</span><span class="lv w">WARNING</span>User authentication succeeded</li>
    <li><span class="tm">17:39:48</span><span class="lv w">WARNING</span>User session timeout</li>
    <li><span class="tm">17:38:48</span><span class="lv s">SUCCESS</span>User session timeout</li>
    <li><span class="tm">17:35:48</span><span class="lv s">SUCCESS</span>Network traffic spike detected</li>
    <li><span class="tm">17:33:48</span><span class="lv e">ERROR</span>User authentication succeeded</li>
    <li><span class="tm">17:31:48</span><span class="lv i">INFO</span>User session timeout</li>
    <li><span class="tm">17:29:48</span><span class="lv w">WARNING</span>User authentication succeeded</li>
    <li><span class="tm">17:25:48</span><span class="lv e">ERROR</span>Backup process initiated</li>
    <li><span class="tm">17:21:48</span><span class="lv i">INFO</span>Database connection established</li>
  </ul>
</section>
</body>
</html>
